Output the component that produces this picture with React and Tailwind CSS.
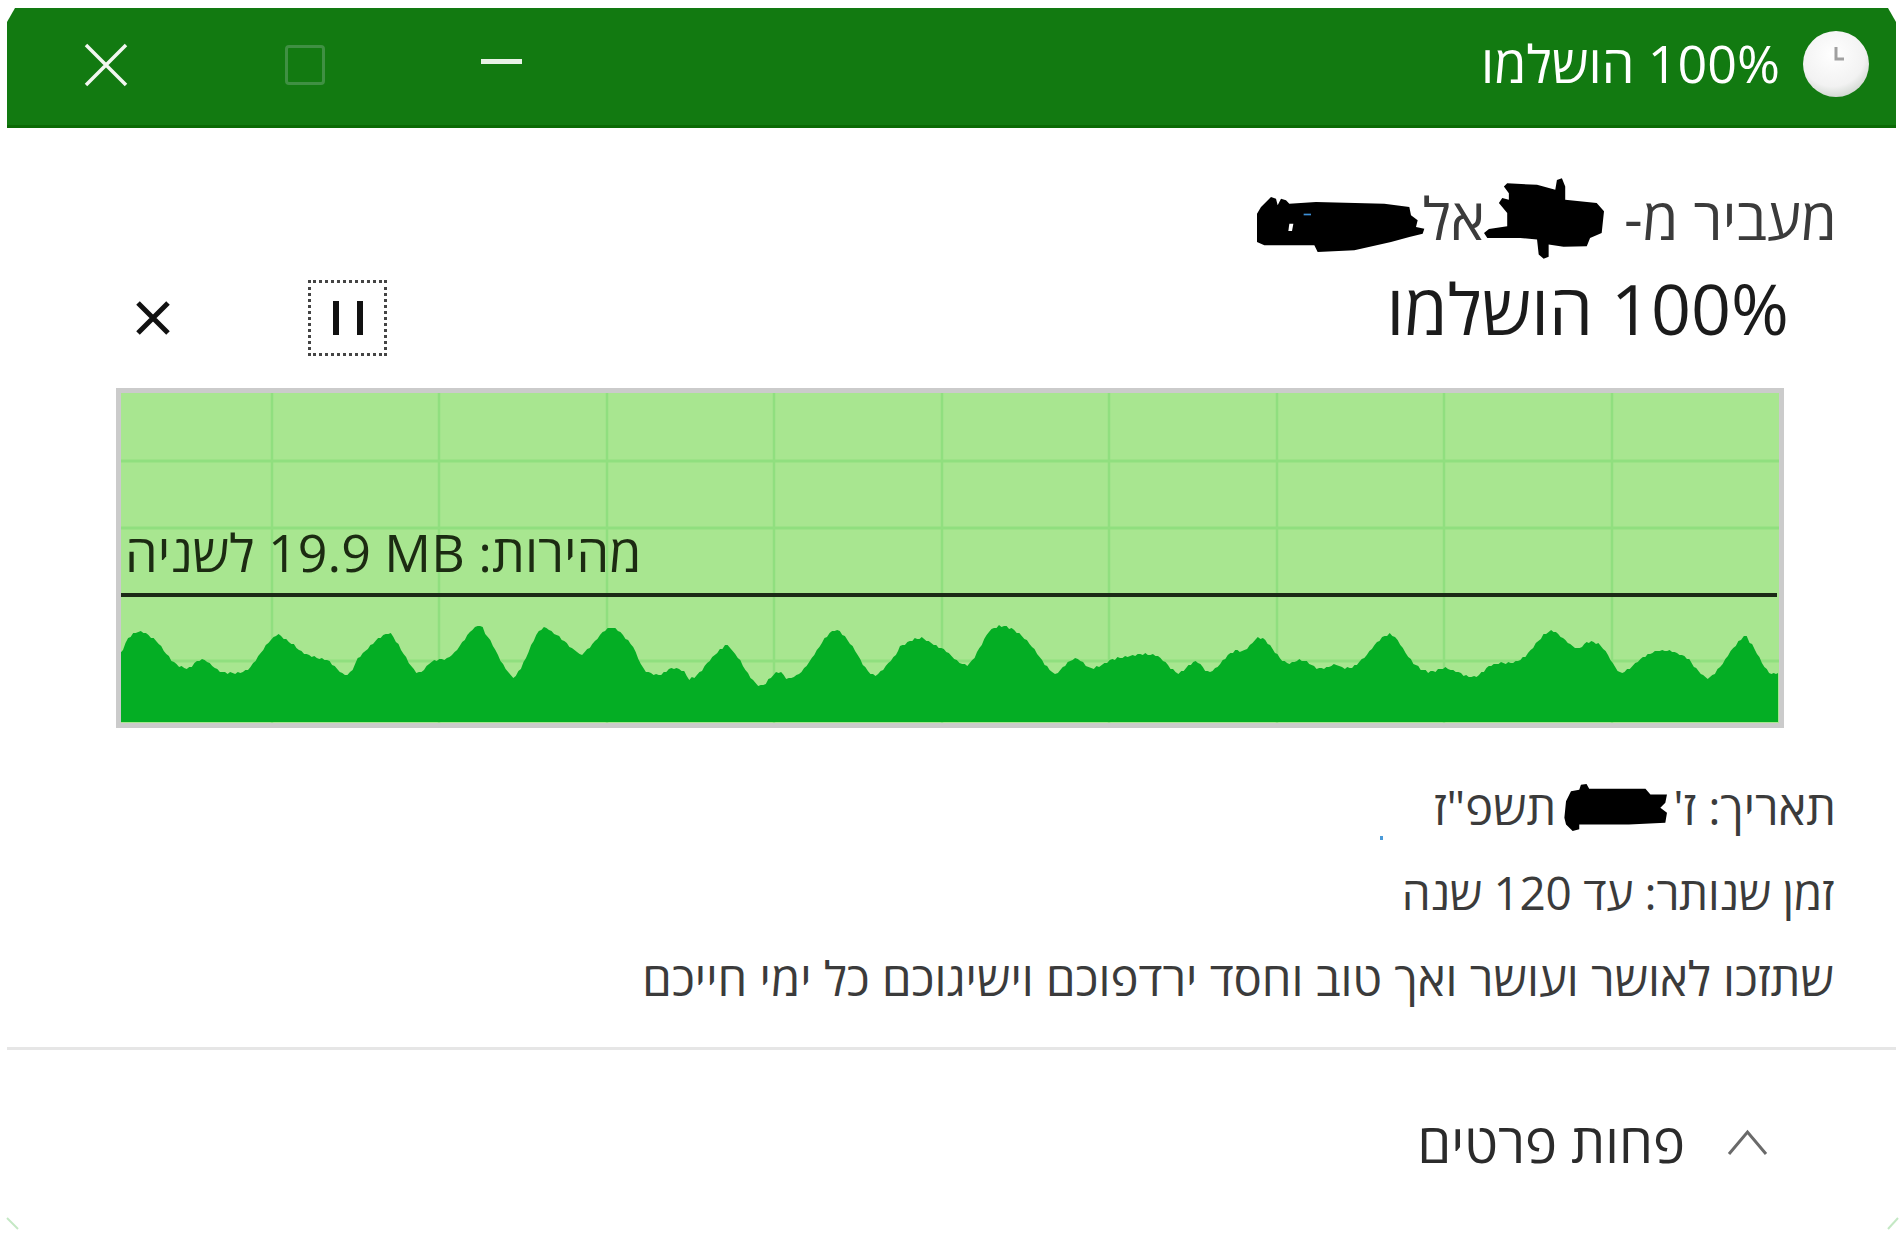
const z3 = [[40,460],[55,415],[80,395],[115,430],[140,480],[170,505],[195,480],[210,485],[235,515],[280,515],[300,490],[340,412],[360,415],[400,460],[450,485],[485,525],[505,475],[560,403],[580,425],[620,515],[650,485],[690,465],[735,383],[755,400],[800,515],[820,515],[860,395],[890,400],[935,455],[950,455],[1000,383],[1045,440],[1065,505],[1095,525],[1120,505],[1145,515],[1160,535],[1220,445],[1240,455],[1290,555],[1330,515],[1350,535],[1385,495],[1435,395],[1470,430],[1515,525],[1560,465]];
const z4 = [[0,440],[30,415],[50,425],[85,460],[113,495],[130,470],[155,395],[190,383],[230,440],[265,515],[275,515],[305,475],[333,505],[370,478],[445,465],[480,515],[490,515],[515,485],[540,515],[580,455],[600,452],[628,413],[670,485],[700,480],[730,505],[760,495],[775,505],[800,485],[853,403],[890,480],[920,515],[950,505],[1000,530],[1030,495],[1085,475],[1130,395],[1155,415],[1180,445],[1200,425],[1225,445],[1250,510],[1262,515],[1290,478],[1315,455],[1345,455],[1375,480],[1395,520],[1415,525],[1465,420],[1480,425],[1510,510],[1530,520]];
const pts = [
  ...z3.map(([x, y]) => [100 + x / 1.96, 500 + y / 3]),
  ...z4.map(([x, y]) => [900 + x / 1.742, 500 + y / 3]),
];
const OX = 121, OY = 393;

function buildWave() {
  const p = pts.map(([x, y]) => [x - OX, y - OY]);
  const out = [];
  for (let i = 0; i < p.length - 1; i++) {
    const a = p[Math.max(i - 1, 0)], b = p[i], c = p[i + 1], d = p[Math.min(i + 2, p.length - 1)];
    const steps = Math.max(2, Math.round((c[0] - b[0]) / 2.5));
    for (let s = 0; s < steps; s++) {
      const t = s / steps, t2 = t * t, t3 = t2 * t;
      const k = 0.6;
      const h = (v0, v1, v2, v3) =>
        (2 * t3 - 3 * t2 + 1) * v1 + (t3 - 2 * t2 + t) * k * (v2 - v0) + (-2 * t3 + 3 * t2) * v2 + (t3 - t2) * k * (v3 - v1);
      const x = b[0] + (c[0] - b[0]) * t;
      const y = h(a[1], b[1], c[1], d[1]) + Math.sin(x * 0.9) * 0.9;
      out.push(`${x.toFixed(1)} ${Math.round(y)}`);
    }
  }
  return "M0 329L" + out.join("L") + "L1657 " + Math.round(p[p.length - 1][1]) + "L1657 329Z";
}
const wave = buildWave();
const vLines = [272, 439, 607, 774, 942, 1109, 1277, 1444, 1612];
const hLines = [461, 528, 661];

function Chart() {
  return (
    <div className="relative ml-[116px] mr-[119px] mt-[30px] h-[340px] border-[5px] border-[#cbcbcb] bg-[#a8e690]">
      <svg className="block" width="1658" height="330" viewBox="0 0 1658 330">
        {vLines.map((x) => (
          <line key={x} x1={x - OX} x2={x - OX} y1="0" y2="330" stroke="#90df7f" strokeWidth="2.5" />
        ))}
        {hLines.map((y) => (
          <line key={y} x1="0" x2="1658" y1={y - OY} y2={y - OY} stroke="#90df7f" strokeWidth="3" />
        ))}
        <line x1="0" x2="1656" y1="202" y2="202" stroke="#1b2a16" strokeWidth="4" />
        <path d={wave} fill="#04ae24" />
      </svg>
      <span className="absolute left-[4px] top-[129px] text-[52px] leading-[60px] text-[#1c2b12] whitespace-nowrap">
        מהירות: <bdi dir="ltr">19.9 MB</bdi> לשניה
      </span>
    </div>
  );
}

export default function App() {
  return (
    <div dir="rtl" className="relative w-[1903px] h-[1237px] bg-white overflow-hidden font-['Open_Sans','Liberation_Sans',sans-serif] text-[#333]">
      <header className="mx-[7px] mt-[8px] h-[120px] bg-[#127a11] border-b-[3px] border-[#0b6a05] flex items-center justify-between [clip-path:polygon(8px_0,calc(100%-8px)_0,100%_14px,100%_100%,0_100%,0_14px)]">
        <div className="flex items-center gap-[22px] mr-[26px]">
          <svg className="mb-[5px]" width="68" height="68" viewBox="0 0 68 68">
            <defs>
              <radialGradient id="clk" cx="45%" cy="35%" r="70%">
                <stop offset="0%" stopColor="#ffffff" />
                <stop offset="70%" stopColor="#f2f2f2" />
                <stop offset="100%" stopColor="#cbd2cb" />
              </radialGradient>
            </defs>
            <circle cx="34" cy="34" r="33" fill="url(#clk)" />
            <path d="M34 17V29H42" stroke="#a0a0a0" strokeWidth="3" fill="none" />
          </svg>
          <span className="mb-[8px] text-[52px] leading-none text-white">100% הושלמו</span>
        </div>
        <div dir="ltr" className="flex items-center gap-[160px] ml-[77px] mb-[4px]">
          <svg width="44" height="44" viewBox="0 0 44 44"><path d="M2 2L42 42M42 2L2 42" stroke="#f2f7f0" strokeWidth="3.5" /></svg>
          <div className="w-[40px] h-[40px] ml-[-3px] rounded-[4px] border-[3px] border-[#3f9043]"></div>
          <div className="w-[41px] h-[5px] ml-[-4px] mb-[6px] bg-[#e8f2e6]"></div>
        </div>
      </header>

      <div className="mt-[60px] h-[60px] pr-[66px] flex items-center text-[58px] leading-[60px] text-[#3b3b3b] whitespace-nowrap">
        <span>מעביר מ-</span>
        <svg className="mr-[20px] shrink-0" width="120" height="81" viewBox="720 25 362 243">
          <path d="M720 190L735 178L790 170L790 130L765 100L775 85L795 90L795 70L780 50L790 40L880 45L935 60L940 30L955 25L965 50L965 90L1060 100L1082 125L1075 190L1040 205L1030 230L960 232L915 225L915 262L900 268L885 255L880 210L830 205L730 205Z" fill="#000" />
        </svg>
        <span className="mr-[-1px] ml-[-2px]">אל</span>
        <svg className="mt-[12px] shrink-0" width="169" height="55" viewBox="35 80 507 165">
          <path d="M38 215L38 130L50 110L80 80L95 85L100 105L110 85L125 90L135 100L215 95L420 100L495 110L500 135L520 150L515 170L540 175L535 190L495 200L440 215L330 240L220 245L210 225L60 225Z" fill="#000" />
          <path d="M135 160L147 160L143 182L132 182Z" fill="#fff" />
          <path d="M178 130L200 130L200 135L178 135Z" fill="#3d8fd6" />
        </svg>
      </div>

      <div className="mt-[30px] h-[80px] pl-[136px] pr-[114px] flex items-center justify-between">
        <span className="mb-[20px] text-[70px] leading-[80px] text-[#1b1b1b] whitespace-nowrap">100% הושלמו</span>
        <div dir="ltr" className="flex items-center gap-[138px]">
          <svg width="34" height="34" viewBox="0 0 34 34"><path d="M2 2L32 32M32 2L2 32" stroke="#111" strokeWidth="5" /></svg>
          <div className="w-[79px] h-[76px] border-[3px] border-dotted border-[#444] flex items-center justify-center gap-[18px]">
            <div className="w-[6px] h-[34px] bg-[#111]"></div>
            <div className="w-[6px] h-[34px] bg-[#111]"></div>
          </div>
        </div>
      </div>

      <Chart />

      <div className="mt-[37px] pr-[69px] text-[47px] text-[#3b3b3b] whitespace-nowrap">
        <div className="h-[85px] mr-[-2px] flex items-center">
          <span>תאריך: ז'</span>
          <svg className="mr-[4px] shrink-0" width="105" height="47" viewBox="445 28 315 142">
            <path d="M445 130L450 80L465 50L490 45L495 30L512 28L520 42L690 42L705 60L755 60L750 85L735 100L755 115L750 145L640 150L560 150L490 150L490 165L470 170L450 150Z" fill="#000" />
          </svg>
          <span className="mr-[8px]">תשפ"ז</span>
        </div>
        <div className="h-[85px] flex items-center text-[46px] tracking-[-0.3px]">זמן שנותר: עד 120 שנה</div>
        <div className="h-[86px] flex items-center text-[47.300px]">שתזכו לאושר ועושר ואך טוב וחסד ירדפוכם וישיגוכם כל ימי חייכם</div>
      </div>

      <div className="mx-[7px] mt-[26px] h-[3px] bg-[#e6e6e6]"></div>

      <div className="mt-[62px] h-[60px] pr-[135px] flex items-center gap-[42px]">
        <svg width="41" height="27" viewBox="0 0 41 27"><path d="M2 25L20.500 3L39 25" stroke="#6a6a6a" strokeWidth="3" fill="none" /></svg>
        <span className="text-[54px] text-[#2b2b2b] whitespace-nowrap">פחות פרטים</span>
      </div>

      <div className="absolute left-[1380px] top-[836px] w-[3px] h-[4px] bg-[#4a9ad8]"></div>
      <svg className="absolute left-[5px] top-[1216px]" width="15" height="15" viewBox="0 0 15 15"><path d="M2 2L13 13" stroke="#c4e8c4" strokeWidth="2" /></svg>
      <svg className="absolute right-[3px] top-[1216px]" width="15" height="15" viewBox="0 0 15 15"><path d="M13 2L3 13" stroke="#c4e8c4" strokeWidth="2" /></svg>
    </div>
  );
}
